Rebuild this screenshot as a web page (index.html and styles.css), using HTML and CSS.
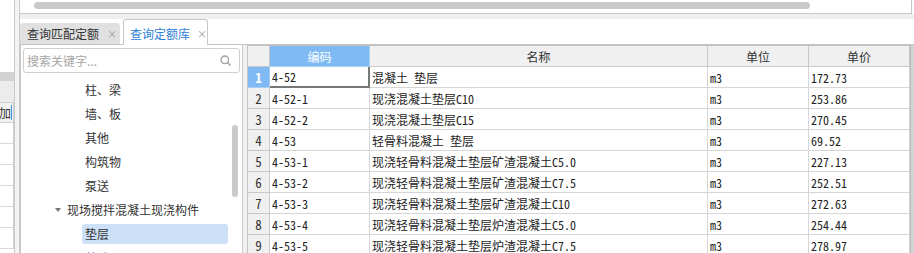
FILE: index.html
```html
<!DOCTYPE html>
<html lang="zh">
<head>
<meta charset="utf-8">
<link rel="stylesheet" href="styles.css">
</head>
<body>
<div class="sliver">
  <div class="sl-top"></div>
  <div class="sl-bar"></div>
  <div class="sl-band"></div>
  <div class="sl-head"><span>添加</span></div>
  <div class="sl-row"></div><div class="sl-row"></div><div class="sl-row"></div>
  <div class="sl-row"></div><div class="sl-row"></div><div class="sl-row"></div>
</div>
<div class="gutter"></div>
<div class="main">
  <div class="top"><div class="hthumb"></div></div>
  <div class="strip"></div>
  <div class="tabs">
    <div class="tab">查询匹配定额<span class="x">×</span></div>
    <div class="tab active">查询定额库<span class="x">×</span></div>
  </div>
  <div class="content">
    <div class="tree">
      <div class="search">
        <span class="ph">搜索关键字...</span>
        <svg class="mag" width="11" height="11" viewBox="0 0 11 11"><circle cx="4.8" cy="4.8" r="3.8" fill="none" stroke="#a0a0a0" stroke-width="1.3"/><path d="M7.6 7.6 L10.2 10.2" stroke="#a0a0a0" stroke-width="1.4" stroke-linecap="round"/></svg>
      </div>
      <div class="list">
        <div class="item child"><span class="lbl">柱、梁</span></div>
        <div class="item child"><span class="lbl">墙、板</span></div>
        <div class="item child"><span class="lbl">其他</span></div>
        <div class="item child"><span class="lbl">构筑物</span></div>
        <div class="item child"><span class="lbl">泵送</span></div>
        <div class="item parent"><span class="tri"></span><span class="lbl">现场搅拌混凝土现浇构件</span></div>
        <div class="item child"><span class="lbl sel">垫层</span></div>
        <div class="item child"><span class="lbl next">基础</span></div>
      </div>
      <div class="vthumb"></div>
    </div>
    <div class="splitter"></div>
    <div class="grid">
      <div class="row head">
        <div class="c num"></div>
        <div class="c code hl">编码</div>
        <div class="c name">名称</div>
        <div class="c unit">单位</div>
        <div class="c price">单价</div>
      </div>
      <div class="row">
        <div class="c num hl">1</div>
        <div class="c code cur">4-52</div>
        <div class="c name">混凝土 垫层</div>
        <div class="c unit">m3</div>
        <div class="c price">172.73</div>
      </div>
      <div class="row">
        <div class="c num">2</div>
        <div class="c code">4-52-1</div>
        <div class="c name">现浇混凝土垫层C10</div>
        <div class="c unit">m3</div>
        <div class="c price">253.86</div>
      </div>
      <div class="row">
        <div class="c num">3</div>
        <div class="c code">4-52-2</div>
        <div class="c name">现浇混凝土垫层C15</div>
        <div class="c unit">m3</div>
        <div class="c price">270.45</div>
      </div>
      <div class="row">
        <div class="c num">4</div>
        <div class="c code">4-53</div>
        <div class="c name">轻骨料混凝土 垫层</div>
        <div class="c unit">m3</div>
        <div class="c price">69.52</div>
      </div>
      <div class="row">
        <div class="c num">5</div>
        <div class="c code">4-53-1</div>
        <div class="c name">现浇轻骨料混凝土垫层矿渣混凝土C5.0</div>
        <div class="c unit">m3</div>
        <div class="c price">227.13</div>
      </div>
      <div class="row">
        <div class="c num">6</div>
        <div class="c code">4-53-2</div>
        <div class="c name">现浇轻骨料混凝土垫层矿渣混凝土C7.5</div>
        <div class="c unit">m3</div>
        <div class="c price">252.51</div>
      </div>
      <div class="row">
        <div class="c num">7</div>
        <div class="c code">4-53-3</div>
        <div class="c name">现浇轻骨料混凝土垫层矿渣混凝土C10</div>
        <div class="c unit">m3</div>
        <div class="c price">272.63</div>
      </div>
      <div class="row">
        <div class="c num">8</div>
        <div class="c code">4-53-4</div>
        <div class="c name">现浇轻骨料混凝土垫层炉渣混凝土C5.0</div>
        <div class="c unit">m3</div>
        <div class="c price">254.44</div>
      </div>
      <div class="row">
        <div class="c num">9</div>
        <div class="c code">4-53-5</div>
        <div class="c name">现浇轻骨料混凝土垫层炉渣混凝土C7.5</div>
        <div class="c unit">m3</div>
        <div class="c price">278.97</div>
      </div>
    </div>
    <div class="vscroll"></div>
  </div>
</div>
</body>
</html>
```

FILE: styles.css
```css
* { box-sizing: border-box; }
html, body { margin: 0; padding: 0; }
body {
  width: 914px;
  height: 253px;
  overflow: hidden;
  display: flex;
  background: #fff;
  font-family: "Noto Sans CJK SC", "Noto Sans", sans-serif;
  color: #333;
}

/* left partial panel */
.sliver {
  width: 15px;
  flex: none;
  border-right: 1px solid #c8c8c8;
  overflow: hidden;
  display: flex;
  flex-direction: column;
}
.sl-top { height: 72px; background: #fff; }
.sl-bar { height: 9px; background: #d2d2d2; }
.sl-band { height: 22px; background: #ececec; border-bottom: 1px solid #d0d0d0; }
.sl-head {
  height: 20px;
  border-right: 1px solid #d0d0d0;
  border-bottom: 1px solid #d0d0d0;
  background: #f2f2f2;
  display: flex;
  justify-content: flex-end;
  align-items: center;
  font-size: 12px;
  overflow: hidden;
  white-space: nowrap;
}
.sl-head span { border-right: 1px solid #4a90e2; margin-right: 1px; line-height: 15px; }
.sl-row { height: 21px; border-right: 1px solid #d0d0d0; border-bottom: 1px solid #d8d8d8; flex: none; }

.gutter { width: 5px; flex: none; background: #f4f4f4; border-right: 1px solid #c8c8c8; }

.main {
  flex: 1;
  display: flex;
  flex-direction: column;
  min-width: 0;
}
.top {
  height: 14px;
  flex: none;
  margin-right: 2px;
  border-right: 1px solid #c8c8c8;
  border-bottom: 1px solid #c8c8c8;
  padding: 2px 0 0 14px;
}
.hthumb {
  width: 776px;
  height: 7px;
  border-radius: 4px;
  background: #c9c9c9;
}
.strip { height: 5px; flex: none; background: #efefef; }

.tabs {
  height: 26px;
  flex: none;
  display: flex;
  align-items: flex-end;
  gap: 3px;
  border-bottom: 1px solid #c4c4c4;
  font-size: 12px;
}
.tab {
  height: 21px;
  width: 100px;
  background: #e0e0e0;
  border-radius: 3px 3px 0 0;
  padding-left: 7px;
  display: flex;
  align-items: center;
  color: #333;
  white-space: nowrap;
}
.tab .x { font-size: 10px; color: #999; margin-left: 8px; }
.tab.active {
  height: 26px;
  width: 85px;
  background: #fff;
  border: 1px solid #c8c8c8;
  border-bottom: none;
  color: #2f80d8;
  margin-bottom: -1px;
  padding-left: 6px;
  padding-top: 1px;
}
.tab.active .x { margin-left: 7px; }

.content {
  flex: 1;
  display: flex;
  min-height: 0;
}
.tree {
  width: 223px;
  flex: none;
  position: relative;
  border-left: 1px solid #c8c8c8;
  border-right: 1px solid #d0d0d0;
  overflow: hidden;
  padding: 3px 0 0 2px;
}
.search {
  width: 217px;
  height: 25px;
  border: 1px solid #cfcfcf;
  border-radius: 3px;
  display: flex;
  align-items: center;
  justify-content: space-between;
  padding: 0 8px 0 3px;
  font-size: 12px;
}
.ph { color: #a6a6a6; }
.list { margin-top: 5px; font-size: 12px; }
.item {
  height: 24px;
  display: flex;
  align-items: center;
  white-space: nowrap;
  color: #333;
}
.item.child { padding-left: 59px; }
.item.parent { padding-left: 32px; }
.tri {
  width: 0; height: 0;
  border-left: 3.5px solid transparent;
  border-right: 3.5px solid transparent;
  border-top: 4px solid #777;
  margin-right: 3px;
}
.lbl { display: inline-block; padding: 0 3px; line-height: 20px; }
.lbl.sel {
  width: 146px;
  background: #cce1f8;
  border-radius: 3px;
}
.lbl.next { color: #3f87dc; }
.vthumb {
  position: absolute;
  left: 211px;
  top: 80px;
  width: 6px;
  height: 72px;
  border-radius: 3px;
  background: #cacaca;
}
.splitter {
  width: 5px;
  flex: none;
  background: #f0f0f0;
  border-right: 1px solid #c4c4c4;
}
.grid {
  width: 662px;
  flex: none;
  border-top: 1px solid #c0c0c0;
  overflow: hidden;
  font-family: "Noto Sans Mono CJK SC", "Noto Sans CJK SC", "Liberation Mono", monospace;
  font-size: 12px;
  color: #222;
}
.row {
  display: flex;
  height: 21px;
}
.c {
  height: 21px;
  border-right: 1px solid #d6d6d6;
  border-bottom: 1px solid #d6d6d6;
  padding-left: 2px;
  display: flex;
  align-items: center;
  white-space: nowrap;
  overflow: hidden;
  flex: none;
}
.num {
  width: 22px;
  padding: 0;
  justify-content: center;
  background: #f0f0f0;
  border-color: #c8c8c8;
  font-size: 13px;
  color: #333;
}
.code { width: 100px; }
.name { width: 338px; }
.unit { width: 101px; }
.price { width: 101px; }
.head .c {
  justify-content: center;
  background: #f0f0f0;
  border-color: #c8c8c8;
  font-family: "Noto Sans CJK SC", sans-serif;
  font-size: 12px;
  color: #333;
  padding: 0;
}
.head .c.hl, .c.num.hl {
  background: #7fbaf5;
  color: #fff;
  border-color: #a9cff5;
}
.c.num.hl { font-weight: bold; }
.c.cur {
  border-right: 2px solid #777;
  border-bottom: 2px solid #777;
}
.vscroll {
  width: 4px;
  flex: none;
  background: #d4d4d4;
  border-left: 1px solid #b8b8b8;
}
```
